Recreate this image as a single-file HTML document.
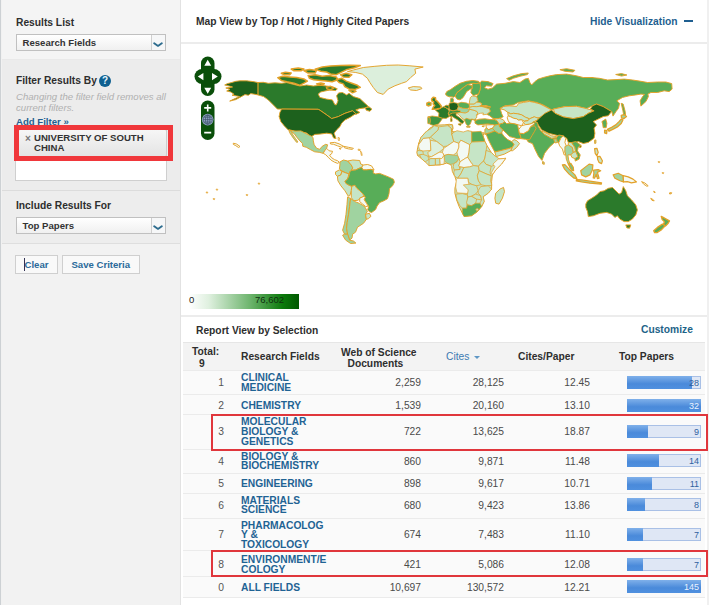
<!DOCTYPE html>
<html lang="en">
<head>
<meta charset="utf-8">
<title>Research Fields - University of South China</title>
<style>
*{box-sizing:border-box;margin:0;padding:0}
html,body{width:709px;height:605px;overflow:hidden;background:#fff}
body{font-family:"Liberation Sans",Arial,sans-serif;font-size:11px;color:#333;position:relative}
.abs{position:absolute}
.b{font-weight:bold}
#side{left:0;top:0;width:181px;height:605px;background:#f1f1f1;border-left:1.2px solid #cdd1d4;border-right:1px solid #e2e2e2}
.sec{position:absolute;left:2px;width:178px}
.h{position:absolute;font-weight:bold;font-size:10.25px;color:#2e2e2e;white-space:nowrap;line-height:12px}
.sel{position:absolute;left:15.5px;width:150.5px;height:16.5px;background:linear-gradient(#fff,#f0f0f0);border:1px solid #c0c0c0;font-weight:bold;font-size:9.6px;line-height:15px;padding-left:6px;color:#333;white-space:nowrap}
.sel i{position:absolute;right:0;top:0;width:14px;height:14.5px;border-left:1px solid #cfcfcf;background:#f6f7f8}
.sel svg{position:absolute;right:2px;top:7.2px}
.btn{position:absolute;top:255px;height:19px;background:#f9f9f9;border:1px solid #cfcfcf;color:#2a6a9a;font-weight:bold;font-size:9.6px;line-height:17.5px;text-align:center;white-space:nowrap}
.lnk{color:#1f5f90;font-weight:bold}
#main{left:181px;top:0;width:526px;height:605px;background:#fff}
.hl{position:absolute;left:181px;width:526px;height:2px;background:#ececec}
table{border-collapse:collapse}
.row{position:absolute;left:183px;width:522px;border-top:1px solid #ebebeb;background:#fafafa}
.row .n{position:absolute;left:28px;width:20px;text-align:center;color:#555;font-size:10.3px}
.row .f{position:absolute;left:58px;color:#1f6394;font-weight:bold;font-size:10.25px;line-height:9.6px;white-space:nowrap}
.row .v{position:absolute;text-align:right;color:#4a4a4a;font-size:10.25px;white-space:nowrap;width:80px;line-height:12px}
.bar{position:absolute;left:444px;width:74px;height:13px;background:#dfe7f5;border:1px solid #a9c0e6;border-left:none}
.bar b{position:absolute;left:0;top:-1px;height:13px;background:linear-gradient(#7fb0ea,#4a8ada 60%,#4f90df)}
.bar span{position:absolute;right:1px;top:0;font-size:9px;line-height:12px;color:#2f5fa0;font-weight:normal}
.bar span.w{color:#eaf2ff}
.red{position:absolute;border:2px solid #e0363c;pointer-events:none}
</style>
</head>
<body>
<div id="side" class="abs"></div>
<div class="sec" style="top:0;height:58.6px;background:#f4f4f4"></div>
<div class="sec" style="top:58.6px;height:132.4px;background:#ececec;border-top:1px solid #e9e9e9;border-bottom:1px solid #dcdcdc"></div>
<div class="sec" style="top:191px;height:53px;background:#ededed;border-bottom:1px solid #dedede"></div>
<div class="sec" style="top:244px;height:361px;background:#f2f2f2"></div>

<div class="h" style="left:16px;top:17px">Results List</div>
<div class="sel" style="top:34px">Research Fields<i></i><svg width="10" height="6" viewBox="0 0 10 6"><path d="M1.2 1.2 L5 3.9 L8.8 1.2" fill="none" stroke="#2d6c8e" stroke-width="1.9" stroke-linecap="round" stroke-linejoin="round"/></svg></div>

<div class="h" style="left:16px;top:75px">Filter Results By</div>
<div class="abs" style="left:99px;top:75px;width:12px;height:12px;border-radius:6px;background:#0f6090;color:#e6f6ff;font-weight:bold;font-size:10px;line-height:12px;text-align:center">?</div>
<div class="abs" style="left:16px;top:92.2px;width:160px;font-style:italic;font-size:9.6px;line-height:10.5px;color:#b0b0b0;white-space:nowrap">Changing the filter field removes all<br>current filters.</div>
<div class="abs lnk" style="left:16px;top:116px;font-size:9.6px;line-height:12px;white-space:nowrap">Add Filter »</div>

<div class="abs" style="left:15px;top:127px;width:152px;height:54px;background:#fff;border:1px solid #cfcfcf"></div>
<div class="abs" style="left:18px;top:129px;width:149px;height:28px;background:linear-gradient(#f6f6f6,#e4e4e4);border:1px solid #cdcdcd;border-radius:2px"></div>
<div class="abs" style="left:25px;top:133.5px;font-size:10px;line-height:10px;color:#777;font-weight:bold">×</div>
<div class="abs b" style="left:34px;top:133px;font-size:9.6px;line-height:10px;color:#333;white-space:nowrap">UNIVERSITY OF SOUTH<br>CHINA</div>
<div class="red" style="left:14px;top:125px;width:158.5px;height:36px;border-width:5px;border-color:#f0373b"></div>

<div class="h" style="left:16px;top:200px">Include Results For</div>
<div class="sel" style="top:217px">Top Papers<i></i><svg width="10" height="6" viewBox="0 0 10 6"><path d="M1.2 1.2 L5 3.9 L8.8 1.2" fill="none" stroke="#2d6c8e" stroke-width="1.9" stroke-linecap="round" stroke-linejoin="round"/></svg></div>

<div class="btn" style="left:15px;width:43px">Clear</div>
<div class="abs" style="left:24px;top:258px;width:1px;height:13px;background:#335"></div>
<div class="btn" style="left:62px;width:77.5px">Save Criteria</div>

<div id="main" class="abs"></div>
<div class="abs" style="left:707px;top:0;width:2px;height:605px;background:#f0f0f0"></div>
<div class="h" style="left:196px;top:16px">Map View by Top / Hot / Highly Cited Papers</div>
<div class="abs lnk" style="left:590px;top:16px;font-size:10.25px;line-height:12px;white-space:nowrap">Hide Visualization</div>
<div class="abs" style="left:684px;top:20px;width:9px;height:2px;background:#1f5f90"></div>
<div class="hl" style="top:42px"></div>

<svg class="abs" style="left:0;top:0" width="709" height="290" viewBox="0 0 709 290">
<g stroke="#e3a128" stroke-width="0.95" stroke-linejoin="round">
<path d="M257.9 82.5 L263.3 82.3 L268.3 83.3 L274.9 82.8 L281.6 83.3 L286.6 82.6 L293.2 84.3 L299.9 86.0 L306.6 85.0 L313.2 86.0 L319.9 85.3 L326.5 86.0 L333.2 87.0 L337.3 88.8 L335.7 90.6 L329.9 90.0 L324.9 91.0 L320.7 92.0 L318.2 94.1 L319.9 97.4 L326.5 99.1 L332.4 99.9 L334.8 104.6 L336.3 104.9 L338.0 100.8 L336.6 95.8 L338.6 92.9 L342.5 92.5 L346.6 94.9 L349.1 93.3 L353.3 96.6 L359.9 98.6 L364.9 103.3 L368.6 106.6 L364.9 107.9 L359.9 108.6 L355.8 109.9 L359.9 112.4 L355.8 114.4 L353.3 112.8 L352.5 110.8 L345.0 113.3 L338.3 116.6 L331.7 118.6 L326.7 114.9 L320.0 110.3 L318.2 109.3 L281.6 109.1 L277.4 109.1 L273.3 104.9 L268.3 99.9 L263.6 96.6 L257.9 94.9Z" fill="#2b7a2b"/>
<path d="M257.9 82.5 L253.3 81.6 L246.6 80.8 L240.0 80.8 L235.8 81.3 L231.7 82.5 L227.5 83.6 L224.7 85.0 L229.2 86.0 L232.5 87.0 L225.8 88.0 L230.0 89.3 L226.7 91.0 L230.8 92.0 L234.1 94.3 L232.0 95.3 L236.6 95.9 L239.6 96.6 L235.0 98.6 L229.7 101.1 L235.8 99.6 L240.8 96.9 L245.0 94.6 L248.3 95.3 L250.8 93.6 L255.0 94.3 L257.9 94.9Z" fill="#1d611d"/>
<path d="M281.6 109.1 L318.2 109.3 L320.0 110.3 L326.7 114.9 L331.7 118.6 L338.3 116.6 L345.0 113.3 L352.5 110.8 L355.8 113.6 L350.0 117.4 L345.0 119.9 L341.6 123.2 L340.0 126.6 L336.6 129.9 L334.1 133.2 L336.1 138.6 L333.6 138.1 L331.7 133.9 L326.7 133.2 L320.0 134.1 L314.9 134.4 L310.7 137.1 L306.6 132.9 L299.9 131.9 L293.2 131.1 L288.2 129.9 L284.1 125.7 L280.8 121.6 L279.1 116.6 L279.9 112.4Z" fill="#1d611d"/>
<path d="M289.2 129.8 L294.9 131.1 L300.9 130.9 L306.3 133.7 L311.8 136.4 L313.0 137.4 L313.3 140.9 L314.2 144.8 L316.7 148.3 L319.7 149.3 L322.2 146.3 L325.7 144.3 L327.6 144.8 L326.6 148.3 L324.7 150.8 L323.2 153.3 L319.2 152.3 L314.7 151.8 L310.8 149.8 L306.3 147.3 L302.8 146.3 L302.4 143.3 L299.9 140.9 L296.9 137.4 L294.4 133.9 L291.9 131.9Z" fill="#a0d3a0"/>
<path d="M289.0 130.5 L290.9 130.9 L292.9 134.9 L295.4 138.4 L297.9 141.9 L296.7 142.4 L293.9 138.9 L291.4 135.4 L289.5 132.4Z" fill="#a0d3a0"/>
<path d="M323.2 153.3 L324.7 150.8 L326.6 148.3 L329.1 150.8 L332.6 151.3 L331.6 153.8 L329.6 155.2 L331.6 157.7 L334.6 159.7 L337.5 160.7 L339.3 162.2 L337.7 163.4 L334.6 162.2 L331.1 160.2 L328.1 157.2 L325.7 154.7Z" fill="#f3f9f3"/>
<path d="M330.1 142.8 L334.6 142.4 L339.0 143.8 L343.5 146.3 L341.5 147.3 L337.5 145.8 L333.6 144.3 L330.6 144.0Z" fill="#f3f9f3"/>
<path d="M343.7 146.3 L348.5 147.3 L353.4 148.3 L352.4 149.4 L348.5 148.9 L344.5 147.8Z" fill="#f3f9f3"/>
<path d="M339.0 148.3 L341.0 148.6 L340.5 149.4Z" fill="#f3f9f3" stroke-width="0.8"/>
<path d="M338.0 137.4 L339.5 137.9 L339.1 140.9 L338.3 139.9Z" fill="#f3f9f3" stroke-width="0.8"/>
<path d="M358.2 149.1 L360.2 149.5 L359.9 150.5 L358.2 150.3Z" fill="#f3f9f3" stroke-width="0.8"/>
<path d="M360.4 150.8 L361.6 152.5 L362.2 155.4 L361.4 155.4 L360.9 152.9Z" fill="#f3f9f3" stroke-width="0.8"/>
<path d="M233.3 143.2 L236.6 144.0 L240.0 146.5 L238.6 147.5 L235.8 145.7 L233.3 144.4Z" fill="#f3f9f3"/>
<path d="M277.8 77.6 L282.7 76.2 L289.7 76.9 L296.8 77.6 L303.9 79.0 L307.4 81.1 L303.9 83.2 L299.6 85.3 L294.0 83.2 L286.9 81.8 L281.3 80.4Z" fill="#2b7a2b" stroke-width="1.5"/>
<path d="M281.3 73.3 L285.5 72.2 L291.2 73.1 L289.7 74.7 L284.1 74.7Z" fill="#2b7a2b" stroke-width="1.5"/>
<path d="M303.9 70.5 L309.5 69.4 L316.5 70.5 L315.1 73.1 L308.1 73.1Z" fill="#2b7a2b" stroke-width="1.5"/>
<path d="M315.1 69.1 L322.2 67.0 L330.6 66.0 L340.5 65.6 L350.4 65.2 L360.3 65.6 L354.6 67.7 L346.2 69.8 L340.5 72.6 L336.3 74.7 L330.6 74.0 L326.4 71.9 L320.8 71.2Z" fill="#2b7a2b" stroke-width="1.5"/>
<path d="M308.1 75.5 L315.1 74.7 L322.2 76.2 L329.2 75.5 L336.3 76.9 L337.7 79.7 L332.1 81.8 L326.4 81.1 L320.8 80.4 L313.7 79.7 L309.5 78.3Z" fill="#2b7a2b" stroke-width="1.5"/>
<path d="M336.3 79.7 L341.9 78.3 L346.2 81.1 L351.8 83.2 L357.4 85.3 L360.3 87.4 L354.6 89.6 L349.0 88.9 L344.8 86.7 L343.3 83.9 L339.1 82.5Z" fill="#2b7a2b" stroke-width="1.5"/>
<path d="M326.4 87.2 L330.6 86.3 L333.8 88.1 L330.6 89.7 L327.1 89.1Z" fill="#2b7a2b" stroke-width="1.5"/>
<path d="M291.2 69.1 L298.2 68.0 L303.9 69.1 L301.0 70.8 L294.0 70.8Z" fill="#2b7a2b" stroke-width="1.5"/>
<path d="M340.5 74.7 L346.2 73.3 L351.8 74.7 L349.0 77.3 L343.3 77.0Z" fill="#2b7a2b" stroke-width="1.5"/>
<path d="M316.5 83.9 L320.8 82.9 L324.3 83.8 L320.8 85.2Z" fill="#2b7a2b" stroke-width="1.5"/>
<path d="M349.0 90.3 L353.2 89.7 L356.0 91.4 L352.5 92.8Z" fill="#2b7a2b" stroke-width="1.5"/>
<path d="M347.5 71.6 L353.3 70.0 L363.3 67.5 L374.9 66.3 L386.6 65.3 L398.2 65.0 L409.9 65.8 L423.2 67.0 L414.9 69.1 L415.7 73.3 L410.7 77.5 L406.6 81.6 L401.6 83.3 L394.9 85.8 L388.2 89.1 L383.2 94.4 L377.4 92.5 L373.3 87.5 L369.9 82.5 L367.4 78.3 L362.4 74.1 L355.8 72.5Z" fill="#dcefdc"/>
<path d="M408.2 88.0 L413.2 86.6 L420.7 87.0 L421.9 88.6 L416.5 90.5 L410.7 90.0Z" fill="#dcefdc"/>
<path d="M365.3 107.9 L369.1 106.9 L371.9 109.1 L369.9 111.3 L366.3 110.3Z" fill="#2b7a2b"/>
<path d="M339.9 162.0 L343.4 160.0 L347.8 161.0 L351.3 165.0 L352.8 167.9 L351.3 170.4 L349.8 171.9 L348.8 173.9 L345.9 172.9 L341.9 170.9 L339.4 168.9 L339.9 165.0Z" fill="#a0d3a0"/>
<path d="M347.8 161.0 L352.8 160.0 L359.7 160.5 L360.7 164.0 L363.2 165.0 L361.7 167.4 L358.8 168.4 L355.8 169.9 L351.3 170.4 L352.8 167.9 L351.3 165.0Z" fill="#c6e5c6"/>
<path d="M363.2 165.0 L367.7 164.5 L371.6 165.9 L374.1 169.9 L370.7 169.4 L366.7 169.9 L363.2 169.9 L361.7 167.4Z" fill="#f3f9f3"/>
<path d="M335.5 171.9 L339.4 169.9 L341.9 171.4 L340.9 174.9 L337.4 176.4 L335.5 174.4Z" fill="#c6e5c6"/>
<path d="M337.4 176.4 L340.9 174.9 L341.9 171.4 L345.9 172.9 L348.8 173.9 L348.3 176.4 L347.4 179.3 L344.9 181.3 L345.9 183.3 L348.3 184.8 L351.8 186.3 L351.3 190.7 L349.8 195.7 L348.3 196.2 L344.9 190.7 L340.9 185.8 L337.9 180.8Z" fill="#c6e5c6"/>
<path d="M344.9 181.3 L347.4 179.3 L348.8 176.4 L349.8 171.9 L351.3 170.4 L355.8 169.9 L358.8 168.4 L361.7 167.4 L363.2 169.9 L366.7 169.9 L370.7 169.4 L373.6 170.4 L373.1 172.9 L375.6 173.9 L379.6 173.4 L383.5 174.9 L388.5 176.9 L393.5 179.3 L394.4 182.3 L392.5 185.8 L389.5 188.8 L389.0 193.7 L387.5 198.7 L384.0 200.7 L379.6 202.6 L377.1 206.1 L375.6 209.6 L371.6 212.5 L369.2 211.6 L367.7 209.6 L368.7 206.6 L366.7 203.6 L364.2 199.7 L365.2 197.2 L362.7 193.7 L359.7 190.7 L356.8 188.3 L354.8 185.3 L351.8 186.3 L348.3 184.8 L345.9 183.3Z" fill="#58ad58"/>
<path d="M351.8 186.3 L354.8 185.3 L356.8 188.3 L359.7 190.7 L362.7 193.7 L364.2 196.2 L359.7 198.2 L358.3 200.2 L353.8 200.7 L351.3 197.7 L351.3 190.7Z" fill="#c6e5c6"/>
<path d="M359.7 198.2 L364.2 196.2 L365.2 197.2 L364.2 199.7 L366.7 203.6 L368.2 206.1 L365.7 206.6 L362.7 204.1 L359.7 201.6Z" fill="#f3f9f3"/>
<path d="M347.6 196.9 L350.6 198.5 L349.6 206.4 L348.6 214.3 L347.2 222.3 L346.6 228.2 L347.6 234.2 L344.6 234.2 L342.6 230.2 L344.6 223.3 L346.0 214.3 L347.0 204.4Z" fill="#a0d3a0"/>
<path d="M350.6 198.5 L354.5 201.4 L359.5 203.4 L364.5 206.4 L367.4 211.4 L365.5 214.3 L366.4 219.3 L363.5 223.3 L357.5 227.2 L355.5 232.2 L352.6 234.2 L352.0 238.1 L349.6 240.1 L347.6 234.2 L346.6 228.2 L347.2 222.3 L348.6 214.3 L349.6 206.4Z" fill="#a0d3a0"/>
<path d="M365.5 214.3 L369.4 213.3 L371.0 216.3 L368.4 218.7 L366.4 219.3Z" fill="#c6e5c6"/>
<path d="M344.6 234.2 L347.6 234.2 L349.6 240.1 L353.6 241.1 L355.9 243.1 L350.6 243.5 L345.6 240.1 L342.6 235.2Z" fill="#a0d3a0"/>
<path d="M479.8 82.9 L481.7 81.1 L488.0 81.6 L493.1 83.6 L491.6 86.2 L486.1 85.8 L484.5 87.7 L488.0 89.2 L492.4 87.9 L496.6 84.1 L505.0 83.3 L513.3 81.6 L519.9 82.5 L524.9 79.1 L528.3 78.3 L529.9 82.5 L531.6 85.0 L534.9 81.6 L538.3 79.1 L543.2 77.5 L549.9 75.8 L556.6 74.6 L566.6 74.1 L576.5 75.8 L583.2 77.5 L593.2 77.5 L591.0 77.5 L599.3 78.3 L607.6 80.0 L616.0 79.6 L624.3 79.1 L632.6 80.0 L640.9 81.3 L647.6 82.5 L657.6 82.0 L665.9 82.0 L671.7 83.6 L672.1 89.1 L669.2 91.6 L664.2 90.8 L657.6 92.5 L650.9 92.5 L647.9 94.1 L648.4 96.6 L645.9 101.6 L640.9 106.1 L640.1 100.8 L642.6 96.6 L644.6 94.4 L640.9 94.1 L635.9 94.9 L629.3 95.8 L622.6 97.4 L616.8 100.8 L619.6 103.3 L618.5 108.3 L616.0 111.6 L613.0 116.1 L611.8 111.6 L603.2 106.6 L596.6 104.1 L592.4 105.8 L586.6 108.6 L576.6 106.3 L565.0 106.6 L553.3 109.1 L551.6 109.9 L549.1 108.3 L543.2 104.9 L536.6 102.4 L528.3 100.8 L518.3 102.4 L513.3 104.9 L505.0 105.8 L500.0 108.3 L500.2 108.8 L501.7 113.8 L503.2 116.8 L499.7 118.3 L496.3 118.8 L492.8 118.3 L489.8 115.8 L486.9 114.3 L490.3 111.3 L489.3 108.8 L484.9 107.4 L479.9 105.9 L490.5 107.0 L485.5 105.5 L481.0 106.1 L481.7 103.6 L479.1 102.3 L476.6 102.3 L477.9 100.4 L476.6 96.6 L478.5 94.0 L480.1 89.6 L480.6 86.4Z" fill="#58ad58"/>
<path d="M506.6 78.6 L513.3 75.8 L521.6 73.6 L528.3 73.0 L527.4 74.6 L519.9 76.3 L513.3 78.3 L509.1 80.3Z" fill="#58ad58"/>
<path d="M559.9 69.7 L566.6 68.7 L574.9 70.3 L573.2 72.0 L564.9 71.3Z" fill="#58ad58"/>
<path d="M615.7 74.5 L621.5 73.6 L626.9 75.0 L621.5 76.1Z" fill="#58ad58"/>
<path d="M621.2 103.3 L623.2 104.1 L625.2 111.6 L625.7 116.9 L624.0 116.6 L622.9 110.8Z" fill="#58ad58"/>
<path d="M500.2 108.8 L503.7 106.4 L509.7 105.9 L516.6 106.4 L518.6 103.4 L523.5 102.4 L529.5 101.4 L534.4 102.4 L540.0 103.9 L551.6 109.9 L548.2 112.4 L545.7 115.8 L539.9 117.4 L534.9 118.3 L534.4 116.8 L529.5 118.8 L525.5 117.3 L521.6 114.8 L517.6 113.8 L513.6 113.3 L510.7 113.8 L507.7 112.3 L504.2 109.8Z" fill="#c6e5c6"/>
<path d="M507.7 112.3 L510.7 113.8 L513.6 113.3 L517.6 113.8 L521.6 114.8 L525.5 117.3 L529.5 118.8 L528.0 120.7 L524.5 121.2 L521.6 119.7 L518.6 120.2 L516.6 118.8 L513.6 118.3 L510.7 116.8 L508.2 115.8Z" fill="#c6e5c6"/>
<path d="M507.2 117.8 L508.2 115.8 L510.7 116.8 L513.6 118.3 L516.6 118.8 L518.6 120.2 L521.6 119.7 L523.5 122.7 L521.6 125.7 L517.6 124.7 L513.6 123.7 L509.7 123.2 L508.2 120.7Z" fill="#f3f9f3"/>
<path d="M528.0 120.7 L529.5 118.8 L534.4 116.8 L538.4 118.3 L537.4 120.2 L534.9 120.9 L533.5 122.7 L529.5 124.2 L525.5 124.7 L523.5 122.7 L524.5 121.2Z" fill="#c6e5c6"/>
<path d="M553.3 109.1 L565.0 106.6 L576.6 106.3 L586.6 108.6 L594.1 110.8 L588.3 113.3 L583.3 116.6 L573.3 118.6 L563.3 116.9 L555.0 113.3Z" fill="#c6e5c6"/>
<path d="M535.8 121.6 L540.0 117.4 L545.0 113.3 L551.6 109.9 L555.0 113.3 L563.3 116.9 L573.3 118.6 L583.3 116.6 L588.3 113.3 L594.1 110.8 L590.3 109.1 L592.4 105.8 L596.6 104.1 L603.2 106.6 L611.6 111.6 L608.2 115.8 L603.2 116.6 L598.2 119.1 L593.2 121.6 L596.6 124.9 L594.1 128.2 L594.9 133.2 L594.1 138.2 L588.3 142.4 L583.3 143.5 L578.3 141.6 L573.3 143.2 L568.3 142.4 L566.6 138.2 L561.6 136.6 L555.0 134.9 L548.3 133.2 L541.7 129.9 L538.3 124.9Z" fill="#1d611d"/>
<path d="M579.3 145.7 L581.3 145.7 L580.9 147.5 L579.4 147.4Z" fill="#1d611d"/>
<path d="M594.6 140.2 L595.9 139.9 L595.9 143.2 L594.7 143.5Z" fill="#a0d3a0"/>
<path d="M601.9 121.6 L605.7 119.1 L606.9 123.2 L606.2 127.7 L603.2 127.7 L602.7 124.1Z" fill="#58ad58"/>
<path d="M607.4 129.4 L611.6 127.4 L615.7 124.9 L619.0 121.6 L621.2 119.1 L622.9 119.9 L621.2 123.6 L617.4 126.9 L613.2 129.1 L609.1 131.2Z" fill="#a0d3a0" stroke-width="1.3"/>
<path d="M621.2 115.3 L624.0 114.6 L626.5 116.6 L624.0 118.6 L621.5 117.9Z" fill="#a0d3a0" stroke-width="1.3"/>
<path d="M604.6 130.2 L606.9 130.7 L606.6 133.6 L604.6 132.9Z" fill="#a0d3a0" stroke-width="1.3"/>
<path d="M525.0 130.0 L530.0 126.6 L533.3 121.6 L537.5 122.5 L538.3 126.6 L540.8 130.8 L544.1 134.1 L551.6 138.3 L556.6 137.5 L558.6 135.0 L563.3 135.8 L560.8 138.3 L558.6 142.9 L556.3 140.8 L553.3 143.6 L549.1 147.4 L544.6 153.3 L542.0 160.4 L538.6 156.6 L535.3 149.9 L532.5 143.6 L528.3 142.0 L525.3 137.5Z" fill="#58ad58"/>
<path d="M542.5 161.6 L544.1 162.1 L544.3 164.3 L542.6 163.9Z" fill="#a0d3a0"/>
<path d="M540.8 130.8 L544.1 132.0 L551.6 135.8 L556.6 136.6 L556.6 137.5 L551.6 138.3 L544.1 134.1Z" fill="#c6e5c6"/>
<path d="M553.6 139.1 L556.6 138.8 L557.4 142.5 L554.9 142.9Z" fill="#a0d3a0"/>
<path d="M519.1 133.1 L523.5 133.6 L528.5 130.7 L530.5 126.7 L534.4 125.7 L536.2 128.2 L534.4 131.6 L532.0 135.6 L529.5 139.8 L525.5 139.3 L520.8 138.6 L520.6 136.6Z" fill="#58ad58"/>
<path d="M518.6 129.7 L521.6 125.7 L525.5 124.7 L529.5 124.2 L533.5 122.7 L534.9 123.5 L530.5 126.7 L528.5 130.7 L523.5 133.6 L519.1 133.1Z" fill="#f3f9f3"/>
<path d="M498.8 124.2 L502.7 123.2 L504.7 121.7 L506.7 123.7 L509.7 123.2 L513.6 123.7 L517.6 124.7 L518.6 129.7 L519.1 133.1 L520.6 136.6 L520.8 138.6 L517.6 138.8 L513.6 137.6 L509.7 136.6 L506.7 133.6 L502.7 129.7 L499.7 127.2Z" fill="#58ad58"/>
<path d="M492.8 118.3 L496.3 118.8 L499.7 118.3 L503.2 119.7 L504.7 121.7 L502.7 123.2 L498.8 124.2 L497.3 121.2 L494.8 119.7Z" fill="#c6e5c6"/>
<path d="M475.0 120.7 L478.9 119.2 L484.9 118.8 L489.8 119.5 L494.8 119.7 L497.3 121.2 L498.8 124.2 L494.8 125.2 L492.3 124.7 L487.8 123.9 L482.9 124.4 L477.9 124.9 L475.0 123.2Z" fill="#58ad58"/>
<path d="M472.5 118.8 L475.0 118.3 L476.1 119.7 L474.0 120.5Z" fill="#58ad58"/>
<path d="M492.3 128.2 L494.8 125.2 L498.8 124.2 L499.7 127.2 L502.7 129.7 L501.7 133.1 L498.8 133.6 L494.8 131.1Z" fill="#a0d3a0"/>
<path d="M485.9 124.9 L492.3 124.7 L494.8 125.2 L492.3 128.2 L488.8 129.7 L486.4 128.2Z" fill="#f3f9f3"/>
<path d="M484.9 129.2 L486.4 128.2 L488.8 129.7 L492.3 128.2 L494.8 131.1 L489.3 133.1 L487.4 133.6 L484.9 134.6Z" fill="#a0d3a0"/>
<path d="M485.9 133.6 L489.3 133.1 L494.8 131.1 L498.8 133.6 L501.7 133.1 L504.2 136.6 L507.7 139.6 L511.6 141.6 L514.1 144.3 L512.4 147.3 L508.5 148.7 L504.2 149.7 L499.7 150.9 L494.8 152.0 L491.3 145.5 L488.3 139.6Z" fill="#58ad58"/>
<path d="M494.8 152.0 L499.7 150.9 L504.2 149.7 L508.5 148.7 L512.4 147.3 L510.8 150.7 L504.2 154.2 L496.2 156.6Z" fill="#c6e5c6"/>
<path d="M511.6 141.6 L514.1 139.6 L516.6 140.6 L519.6 143.5 L516.6 147.5 L512.6 150.7 L510.8 150.7 L512.4 147.3 L514.1 144.3Z" fill="#c6e5c6"/>
<path d="M481.9 126.2 L484.4 125.7 L483.7 126.9Z" fill="#a0d3a0"/>
<path d="M427.7 117.5 L429.9 117.3 L430.4 120.7 L429.9 123.9 L427.8 123.5Z" fill="#58ad58" stroke-width="0.8"/>
<path d="M427.7 116.9 L432.2 116.0 L438.5 116.9 L442.6 118.2 L441.0 120.7 L438.5 124.1 L433.4 125.4 L430.3 124.5 L429.9 123.9 L430.4 120.7 L429.9 117.3Z" fill="#3f943f" stroke-width="0.8"/>
<path d="M435.3 109.9 L439.1 109.0 L441.0 107.7 L443.8 106.7 L445.9 107.7 L448.0 109.0 L449.3 111.2 L448.3 113.7 L449.4 116.6 L446.1 118.4 L442.6 118.2 L438.5 116.9 L438.9 113.1 L437.2 111.8Z" fill="#2b7a2b" stroke-width="0.8"/>
<path d="M443.8 106.7 L446.1 105.2 L448.9 105.5 L449.3 108.3 L448.0 109.0 L445.9 107.7Z" fill="#2b7a2b" stroke-width="0.8"/>
<path d="M448.9 105.5 L449.3 103.2 L453.7 102.5 L457.8 103.4 L458.4 106.7 L457.2 109.9 L453.1 110.9 L449.7 109.9 L449.3 108.3Z" fill="#1d611d" stroke-width="0.8"/>
<path d="M450.2 102.3 L450.6 98.5 L452.5 97.8 L453.7 99.8 L453.1 102.5Z" fill="#58ad58" stroke-width="0.8"/>
<path d="M448.3 113.7 L449.3 111.2 L449.7 109.9 L453.1 110.9 L457.2 109.9 L460.1 110.5 L460.7 112.4 L456.9 113.1 L452.5 113.7 L449.4 114.6Z" fill="#3f943f" stroke-width="0.8"/>
<path d="M449.2 114.6 L452.5 113.1 L456.5 112.8 L456.0 115.0 L458.8 116.9 L461.6 119.2 L464.1 121.5 L462.6 123.7 L460.1 122.5 L457.8 119.9 L454.7 118.2 L452.2 116.5 L450.2 116.6 L449.2 115.9Z" fill="#2b7a2b" stroke-width="0.8"/>
<path d="M458.2 123.9 L461.4 123.5 L460.7 125.4 L458.6 124.8Z" fill="#2b7a2b" stroke-width="0.8"/>
<path d="M450.4 118.4 L452.0 118.2 L452.1 121.3 L450.7 121.5Z" fill="#2b7a2b" stroke-width="0.8"/>
<path d="M450.9 115.9 L451.8 115.9 L451.7 117.7 L450.9 117.5Z" fill="#2b7a2b" stroke-width="0.8"/>
<path d="M457.8 103.4 L461.4 102.3 L466.4 102.9 L469.2 104.2 L469.6 107.4 L467.1 108.6 L462.6 108.3 L458.4 106.7Z" fill="#58ad58" stroke-width="0.8"/>
<path d="M457.2 109.9 L458.4 106.7 L462.6 108.3 L467.1 108.6 L469.6 109.3 L468.3 111.8 L465.2 113.1 L460.7 112.4 L460.1 110.5Z" fill="#a0d3a0" stroke-width="0.8"/>
<path d="M456.3 113.3 L460.7 112.4 L465.2 113.1 L468.3 111.8 L469.6 109.3 L472.8 109.9 L476.6 111.2 L477.9 113.1 L476.8 115.6 L476.6 117.9 L474.7 119.4 L472.1 119.4 L470.2 120.1 L466.4 118.8 L464.5 120.1 L461.4 117.5 L458.8 114.6Z" fill="#c6e5c6" stroke-width="0.8"/>
<path d="M464.3 119.7 L466.4 118.4 L470.2 119.4 L472.5 119.0 L471.3 121.3 L470.2 124.3 L468.2 126.0 L466.2 124.3 L465.4 122.2Z" fill="#58ad58" stroke-width="0.8"/>
<path d="M466.4 126.4 L470.2 126.4 L470.0 127.3 L466.7 127.2Z" fill="#58ad58" stroke-width="0.8"/>
<path d="M469.2 104.2 L469.6 101.0 L470.2 97.8 L472.1 95.9 L476.6 96.6 L477.9 100.4 L476.6 102.3 L474.0 104.2Z" fill="#c6e5c6" stroke-width="0.8"/>
<path d="M469.2 104.2 L474.0 104.2 L476.6 102.3 L479.1 102.3 L481.7 103.6 L481.0 106.1 L476.6 106.7 L472.8 106.5 L469.6 107.4Z" fill="#c6e5c6" stroke-width="0.8"/>
<path d="M469.6 107.4 L472.8 106.5 L476.6 106.7 L481.0 106.1 L485.5 105.5 L490.5 107.0 L479.9 105.9 L484.9 107.4 L489.3 108.8 L490.3 111.3 L486.9 114.3 L482.9 114.8 L483.4 113.0 L480.4 113.3 L478.9 113.8 L476.4 115.3 L477.9 113.1 L476.6 111.2 L472.8 109.9 L469.6 109.3Z" fill="#c6e5c6" stroke-width="0.8"/>
<path d="M445.5 94.0 L446.8 91.5 L450.6 89.6 L455.0 86.4 L460.1 83.3 L466.4 81.3 L472.8 80.5 L478.5 81.3 L479.8 82.9 L476.6 83.6 L472.8 83.3 L467.7 84.5 L463.9 87.1 L460.1 90.2 L456.9 92.8 L455.3 95.9 L453.7 97.2 L452.2 96.8 L449.3 96.8 L446.4 95.6Z" fill="#58ad58"/>
<path d="M455.3 95.9 L456.9 92.8 L460.1 90.2 L463.9 87.1 L467.7 84.5 L472.1 85.8 L472.4 88.1 L470.2 89.2 L466.7 91.5 L464.5 95.3 L462.9 97.8 L460.1 99.8 L457.5 99.4 L456.0 97.8Z" fill="#58ad58"/>
<path d="M472.1 85.8 L472.8 83.3 L476.6 83.6 L479.8 82.9 L480.6 86.4 L480.1 89.6 L478.5 94.0 L473.4 95.6 L470.9 92.8 L471.3 89.6 L472.4 88.1Z" fill="#58ad58"/>
<path d="M431.6 99.1 L433.2 97.3 L435.5 97.8 L435.7 100.1 L437.5 101.4 L439.5 103.7 L441.4 106.2 L440.5 108.3 L436.6 109.0 L432.2 109.3 L433.4 107.0 L434.7 105.5 L433.2 103.9 L433.7 101.9 L431.9 101.0Z" fill="#2b7a2b" stroke-width="1.5"/>
<path d="M426.8 103.2 L429.0 102.2 L431.1 102.8 L430.9 105.2 L428.3 106.0 L426.8 105.2Z" fill="#58ad58" stroke-width="1.4"/>
<path d="M424.5 134.7 L429.6 128.3 L434.1 125.8 L438.5 125.1 L444.8 124.8 L449.3 124.3 L452.5 124.8 L453.1 128.3 L451.8 131.5 L456.3 132.1 L461.4 134.7 L465.2 133.4 L467.7 130.9 L472.1 132.1 L477.9 132.8 L484.2 132.8 L483.0 135.8 L484.9 141.5 L486.8 145.3 L491.2 152.3 L494.4 155.5 L498.2 159.1 L505.7 158.3 L501.5 164.1 L495.7 169.9 L492.4 174.9 L491.6 181.6 L491.6 189.1 L488.2 193.2 L483.2 196.6 L484.1 201.6 L481.6 206.6 L477.4 211.6 L471.6 215.7 L464.1 216.5 L462.4 213.2 L459.1 206.6 L456.6 199.9 L454.9 193.2 L454.9 188.2 L456.6 181.6 L454.9 176.6 L452.4 171.6 L451.6 166.6 L450.6 164.4 L446.8 163.1 L439.8 165.0 L435.4 165.0 L429.0 165.6 L425.2 161.8 L421.4 158.6 L417.6 155.5 L417.0 152.3 L417.6 147.8 L418.6 144.0 L420.8 137.7 L424.0 133.9 L426.5 131.3Z" fill="#c6e5c6"/>
<path d="M418.9 144.0 L423.3 138.3 L429.0 137.7 L430.3 140.2 L430.9 150.4 L422.7 151.0 L419.5 149.8 L418.6 146.6Z" fill="#f3f9f3" stroke-width="0.7"/>
<path d="M430.3 137.1 L437.9 130.1 L438.6 126.9 L448.1 125.6 L451.3 128.2 L451.9 134.5 L453.8 141.5 L447.4 145.9 L443.3 146.6 L436.7 141.5Z" fill="#c6e5c6" stroke-width="0.7"/>
<path d="M426.5 131.3 L431.6 128.2 L434.1 125.6 L438.6 126.9 L437.9 130.1 L430.3 137.1 L429.0 137.7 L423.3 138.3 L418.9 144.0 L418.6 144.0 L420.8 137.7 L424.0 133.9Z" fill="#c6e5c6" stroke-width="0.7"/>
<path d="M448.1 125.6 L451.9 124.4 L452.5 127.5 L451.6 130.7 L453.2 132.6 L451.9 134.5 L451.3 128.2Z" fill="#c6e5c6" stroke-width="0.7"/>
<path d="M453.2 132.6 L457.0 130.7 L463.3 132.0 L467.1 130.7 L471.6 131.3 L471.8 142.1 L469.7 144.7 L460.8 140.2 L458.9 143.4 L453.8 141.5 L451.9 134.5Z" fill="#c6e5c6" stroke-width="0.7"/>
<path d="M471.8 132.0 L481.1 131.3 L483.0 135.8 L484.9 141.5 L471.8 142.1Z" fill="#58ad58" stroke-width="0.7"/>
<path d="M430.3 140.2 L436.7 141.5 L443.3 146.6 L443.6 148.5 L439.2 152.3 L434.8 154.8 L431.6 156.7 L428.4 156.1 L427.8 152.3 L430.9 150.4Z" fill="#dcefdc" stroke-width="0.7"/>
<path d="M443.6 148.5 L447.4 145.9 L453.8 141.5 L458.9 143.4 L458.9 147.2 L457.0 152.3 L453.2 155.1 L448.1 154.4 L444.0 155.5 L442.4 152.3Z" fill="#f3f9f3" stroke-width="0.7"/>
<path d="M458.9 143.4 L460.8 140.2 L469.7 144.7 L469.0 152.3 L467.8 157.4 L465.9 158.0 L462.0 160.5 L460.1 161.8 L458.9 158.6 L457.6 155.5 L457.0 152.3 L458.9 147.2Z" fill="#f3f9f3" stroke-width="0.7"/>
<path d="M471.8 142.1 L484.9 141.5 L486.8 145.3 L486.2 150.4 L484.9 158.0 L483.6 161.2 L481.1 163.1 L478.5 166.3 L473.5 165.6 L470.9 162.4 L467.8 157.4 L469.0 152.3 L469.7 144.7Z" fill="#c6e5c6" stroke-width="0.7"/>
<path d="M484.9 158.0 L486.2 150.4 L491.2 152.3 L494.4 155.5 L500.0 159.3 L497.6 164.4 L491.2 166.3 L486.2 164.4 L483.6 161.2Z" fill="#c6e5c6" stroke-width="0.7"/>
<path d="M498.2 159.1 L505.7 158.3 L501.5 164.1 L495.7 169.9 L492.4 174.9 L491.6 172.4 L494.9 166.6 L492.9 164.1Z" fill="#f3f9f3" stroke-width="0.7"/>
<path d="M444.0 155.5 L448.1 154.4 L453.2 155.1 L457.6 155.5 L458.9 158.6 L457.0 161.8 L453.8 163.7 L450.6 164.4 L446.8 163.1 L444.3 160.5Z" fill="#a0d3a0" stroke-width="0.7"/>
<path d="M453.8 163.7 L457.0 161.8 L458.9 158.6 L460.1 161.8 L458.9 165.6 L460.1 169.4 L454.4 170.1 L453.2 166.9Z" fill="#c6e5c6" stroke-width="0.7"/>
<path d="M460.1 161.8 L462.0 160.5 L465.9 158.0 L467.8 157.4 L470.9 162.4 L473.5 165.6 L469.7 166.9 L463.9 167.5 L460.1 166.9 L458.9 165.6Z" fill="#f3f9f3" stroke-width="0.7"/>
<path d="M419.5 154.8 L422.7 154.2 L427.8 156.1 L429.0 159.3 L425.2 161.8 L421.4 158.6Z" fill="#c6e5c6" stroke-width="0.7"/>
<path d="M428.4 156.1 L431.6 156.7 L434.8 154.8 L439.2 152.3 L442.4 152.3 L444.0 155.5 L441.7 158.6 L435.4 158.6 L430.9 158.6Z" fill="#f3f9f3" stroke-width="0.7"/>
<path d="M429.0 159.3 L430.9 158.6 L435.4 158.6 L435.4 165.0 L429.0 165.6Z" fill="#c6e5c6" stroke-width="0.7"/>
<path d="M435.4 158.6 L439.8 158.3 L440.2 164.6 L435.4 165.0Z" fill="#c6e5c6" stroke-width="0.7"/>
<path d="M439.8 158.3 L441.7 158.6 L444.0 155.5 L444.3 160.5 L444.0 164.1 L440.2 164.6Z" fill="#f3f9f3" stroke-width="0.7"/>
<path d="M417.0 152.3 L417.6 150.4 L422.7 151.0 L423.3 153.6 L422.7 154.2 L419.5 154.8 L417.6 155.5Z" fill="#c6e5c6" stroke-width="0.7"/>
<path d="M454.4 170.1 L460.1 169.4 L460.1 166.9 L463.9 167.5 L460.8 173.9 L457.6 178.3 L454.4 175.8 L453.8 172.6Z" fill="#c6e5c6" stroke-width="0.7"/>
<path d="M460.8 173.9 L463.9 167.5 L469.7 166.9 L473.5 165.6 L478.5 166.3 L479.2 170.7 L477.3 175.8 L478.5 180.9 L481.1 184.7 L476.0 185.9 L472.2 184.7 L468.4 182.1 L467.8 178.3 L462.0 178.3 L457.6 178.3Z" fill="#c6e5c6" stroke-width="0.7"/>
<path d="M456.3 179.6 L457.6 178.3 L462.0 178.3 L467.8 178.3 L468.4 182.1 L469.7 187.2 L467.8 193.5 L457.0 192.9 L455.7 187.2Z" fill="#f3f9f3" stroke-width="0.7"/>
<path d="M478.5 166.3 L481.1 163.1 L483.6 161.2 L486.2 164.4 L491.2 166.3 L490.0 172.0 L491.2 175.8 L486.2 173.9 L479.2 170.7Z" fill="#c6e5c6" stroke-width="0.7"/>
<path d="M479.2 170.7 L486.2 173.9 L491.2 175.8 L490.6 180.9 L491.9 185.3 L486.2 185.9 L481.1 184.7 L478.5 180.9 L477.3 175.8Z" fill="#c6e5c6" stroke-width="0.7"/>
<path d="M455.8 194.1 L462.4 193.6 L467.4 194.9 L467.9 196.9 L466.6 208.2 L462.4 208.2 L459.9 205.7 L456.9 199.9Z" fill="#c6e5c6" stroke-width="0.7"/>
<path d="M467.9 196.9 L471.6 196.2 L476.6 199.1 L475.7 203.2 L471.6 205.7 L467.4 204.9 L466.6 202.4Z" fill="#c6e5c6" stroke-width="0.7"/>
<path d="M463.3 184.9 L470.7 184.1 L476.6 185.8 L478.2 190.7 L475.7 194.1 L471.6 196.2 L467.9 196.9 L467.4 194.9 L468.2 189.9Z" fill="#c6e5c6" stroke-width="0.7"/>
<path d="M471.6 196.2 L475.7 194.1 L480.7 195.7 L481.6 199.9 L476.6 199.1Z" fill="#c6e5c6" stroke-width="0.7"/>
<path d="M478.2 190.7 L480.7 186.6 L488.2 185.8 L491.6 189.1 L488.2 193.2 L483.2 196.6 L484.1 201.6 L481.6 206.6 L479.9 203.2 L481.6 199.9 L480.7 195.7 L478.2 193.2Z" fill="#c6e5c6" stroke-width="0.7"/>
<path d="M462.4 208.2 L466.6 208.2 L467.4 204.9 L471.6 205.7 L475.7 203.2 L479.9 203.2 L481.6 206.6 L477.4 211.6 L471.6 215.7 L464.1 216.5 L462.4 213.2Z" fill="#58ad58" stroke-width="0.7"/>
<path d="M475.7 209.1 L477.9 208.2 L478.6 210.2 L476.6 211.2Z" fill="#c6e5c6" stroke-width="0.7"/>
<path d="M495.7 193.2 L499.9 189.1 L503.5 187.4 L504.5 191.6 L502.4 198.2 L499.0 204.1 L495.7 203.2 L494.9 198.2Z" fill="#c6e5c6"/>
<path d="M558.6 142.9 L560.8 138.3 L563.3 135.8 L565.8 138.3 L564.9 142.5 L566.6 146.6 L564.9 151.6 L565.8 154.9 L564.1 154.9 L562.4 149.1 L559.6 145.8Z" fill="#f3f9f3"/>
<path d="M564.9 146.6 L568.3 144.9 L572.4 147.4 L573.3 152.4 L570.8 154.9 L567.9 154.9 L568.6 159.9 L570.3 164.9 L568.6 165.3 L566.3 159.1 L565.8 154.9 L564.9 151.6Z" fill="#a0d3a0"/>
<path d="M568.3 142.5 L571.6 142.5 L574.9 147.4 L575.8 151.6 L573.3 152.4 L572.4 147.4 L568.3 144.9Z" fill="#c6e5c6"/>
<path d="M571.6 142.5 L575.8 141.6 L580.7 144.9 L578.2 147.4 L577.4 150.8 L580.2 154.9 L579.1 159.1 L575.3 161.1 L574.9 158.6 L577.9 156.6 L575.8 151.6 L574.9 147.4Z" fill="#58ad58"/>
<path d="M570.8 154.9 L573.3 152.4 L575.8 151.6 L577.9 156.6 L574.9 158.6 L571.9 157.4Z" fill="#c6e5c6"/>
<path d="M568.6 163.6 L570.8 163.3 L573.3 167.4 L573.6 170.7 L571.6 170.2 L569.6 166.9Z" fill="#7cc07c" stroke-width="1.2"/>
<path d="M562.4 164.9 L564.9 164.6 L569.9 169.9 L574.9 174.9 L576.9 178.6 L574.1 178.2 L569.1 174.1 L564.6 169.1Z" fill="#a0d3a0" stroke-width="1.2"/>
<path d="M580.7 170.7 L584.9 167.4 L589.1 164.1 L592.9 164.9 L592.4 169.9 L589.9 174.9 L585.7 176.9 L581.6 174.9Z" fill="#a0d3a0" stroke-width="1.2"/>
<path d="M576.3 179.6 L581.6 179.9 L589.9 181.2 L601.6 182.9 L601.2 184.2 L589.9 183.2 L581.6 181.9 L576.3 180.9Z" fill="#a0d3a0" stroke-width="1.2"/>
<path d="M593.6 170.2 L598.2 169.6 L600.7 170.7 L597.4 172.4 L599.1 178.2 L597.4 178.6 L596.2 174.1 L594.6 178.2 L593.2 177.9 L593.9 173.2Z" fill="#a0d3a0" stroke-width="1.2"/>
<path d="M594.6 148.6 L596.9 148.3 L598.2 152.4 L596.9 155.8 L595.2 153.3Z" fill="#c6e5c6" stroke-width="1.2"/>
<path d="M597.4 156.6 L599.9 156.3 L602.4 160.8 L601.6 163.6 L599.1 162.4 L597.7 159.6Z" fill="#c6e5c6" stroke-width="1.2"/>
<path d="M613.2 174.9 L618.2 173.2 L623.2 175.7 L623.5 181.9 L619.9 180.7 L614.9 178.2Z" fill="#a0d3a0" stroke-width="1.2"/>
<path d="M623.2 175.7 L628.2 176.9 L633.0 179.1 L636.5 181.9 L631.5 182.9 L627.4 181.6 L623.5 181.9Z" fill="#f3f9f3" stroke-width="1.2"/>
<path d="M585.8 204.1 L587.5 200.8 L591.6 198.3 L596.6 195.0 L600.0 191.6 L604.1 190.8 L608.3 188.3 L612.5 187.5 L615.8 190.8 L619.1 194.1 L621.6 192.5 L623.3 186.6 L625.8 190.8 L627.4 195.8 L631.6 199.9 L635.8 204.9 L637.4 209.9 L635.8 214.9 L632.4 219.1 L628.3 221.6 L624.1 221.6 L619.9 219.1 L617.4 215.8 L614.9 217.4 L611.6 214.1 L606.6 212.4 L600.0 213.3 L593.3 215.8 L588.3 216.6 L587.5 211.6 L585.8 207.4Z" fill="#2b7a2b"/>
<path d="M625.8 224.9 L630.8 224.9 L629.6 228.2 L626.9 227.9Z" fill="#2b7a2b"/>
<path d="M661.2 216.3 L663.2 217.4 L666.2 219.1 L669.5 220.9 L668.2 223.2 L665.7 225.9 L663.2 224.6 L664.5 221.9 L662.2 219.6Z" fill="#58ad58" stroke-width="1.3"/>
<path d="M653.7 230.7 L657.4 227.4 L662.4 224.1 L665.2 225.7 L661.6 229.6 L656.9 232.7 L654.6 232.6Z" fill="#58ad58" stroke-width="1.3"/>
<path d="M641.6 181.6 L644.9 183.0 L648.2 185.8 L646.9 186.3 L643.6 184.1Z" fill="#f3f9f3"/>
<path d="M650.7 198.3 L653.2 199.6 L654.2 200.9 L651.9 200.3Z" fill="#f3f9f3"/>
<path d="M653.6 191.3 L655.2 192.0 L654.6 193.0Z" fill="#f3f9f3"/>
<path d="M669.2 193.0 L671.2 193.3 L670.2 194.3Z" fill="#f3f9f3"/>
<path d="M206.2 192.0 L207.8 192.2 L207.5 193.1 L206.4 193.0Z" fill="#f3f9f3" stroke-width="0.8"/>
<path d="M216.2 189.1 L217.8 189.3 L217.5 190.2 L216.4 190.1Z" fill="#f3f9f3" stroke-width="0.8"/>
<path d="M213.2 198.5 L214.8 198.7 L214.5 199.6 L213.4 199.5Z" fill="#f3f9f3" stroke-width="0.8"/>
<path d="M246.2 194.5 L247.8 194.7 L247.5 195.6 L246.4 195.5Z" fill="#f3f9f3" stroke-width="0.8"/>
<path d="M258.2 183.1 L259.8 183.3 L259.5 184.2 L258.4 184.1Z" fill="#f3f9f3" stroke-width="0.8"/>
<path d="M658.2 161.5 L659.8 161.7 L659.5 162.6 L658.4 162.5Z" fill="#f3f9f3" stroke-width="0.8"/>
<path d="M662.2 172.5 L663.8 172.7 L663.5 173.6 L662.4 173.5Z" fill="#f3f9f3" stroke-width="0.8"/>
<path d="M670.2 192.5 L671.8 192.7 L671.5 193.6 L670.4 193.5Z" fill="#f3f9f3" stroke-width="0.8"/>
</g>
<g stroke="none">
<rect x="201" y="56.5" width="13.5" height="39.5" rx="6.75" fill="#0a4f0a"/>
<rect x="194.5" y="69" width="27" height="15" rx="7.5" fill="#0a4f0a"/>
<path d="M207.7 59.8 L211.2 65.8 L204.3 65.8Z M207.7 93.8 L211.2 87.8 L204.3 87.8Z M197.8 76.5 L203.4 72.9 L203.4 80.2Z M217.8 76.5 L212 72.9 L212 80.2Z" fill="#fff"/>
<rect x="201" y="100.5" width="13.5" height="39.5" rx="6.75" fill="#0a4f0a"/>
<path d="M204.2 107.9 H211.2 M207.7 104.4 V111.4 M204.2 132.6 H211.2" stroke="#fff" stroke-width="1.6" fill="none"/>
<circle cx="207.7" cy="119.6" r="5.8" fill="#93a3c6"/>
<g fill="none" stroke="#2f4a5a" stroke-width="0.6"><circle cx="207.7" cy="119.6" r="4.6"/><ellipse cx="207.7" cy="119.6" rx="2.2" ry="4.6"/><path d="M203.1 119.6 H212.3 M203.8 117.2 H211.6 M203.8 122 H211.6 M207.7 115 V124.2"/></g>
</g>

</svg>

<div class="abs" style="left:189px;top:294px;width:110.3px;height:15px;background:linear-gradient(90deg,#fff 0%,#dff0df 18%,#6fb56f 55%,#0b7a0b 85%,#005800 100%)"></div>
<div class="abs" style="left:189px;top:294px;font-size:9.5px;line-height:11px;color:#222">0</div>
<div class="abs" style="left:255px;top:294px;font-size:9.5px;line-height:11px;color:#0f300f">76,602</div>

<div class="hl" style="top:315px"></div>
<div class="h" style="left:196px;top:325px">Report View by Selection</div>
<div class="abs lnk" style="left:641px;top:324px;font-size:10.25px;line-height:12px;color:#1d6388">Customize</div>

<div class="abs" style="left:183px;top:342px;width:522px;height:29px;background:#f3f3f3;border-top:1px solid #e6e6e6"></div>
<div class="h" style="left:192px;top:346px;line-height:11.5px">Total:<br><span style="padding-left:7px">9</span></div>
<div class="h" style="left:241px;top:351px">Research Fields</div>
<div class="h" style="left:341px;top:346.5px;line-height:11px">Web of Science<br><span style="padding-left:6.5px">Documents</span></div>
<div class="abs" style="left:446px;top:351px;font-size:10.25px;line-height:12px;color:#3c7ab2;white-space:nowrap">Cites</div>
<div class="abs" style="left:474px;top:356px;width:0;height:0;border-left:3px solid transparent;border-right:3px solid transparent;border-top:3px solid #5f97c5"></div>
<div class="h" style="left:518px;top:351px">Cites/Paper</div>
<div class="h" style="left:619px;top:351px">Top Papers</div>

<div class="row" style="top:370px;height:24px"><div class="n" style="top:6.1px;line-height:12px">1</div><div class="f" style="top:2.4px">CLINICAL<br>MEDICINE</div><div class="v" style="left:158px;top:6.1px">2,259</div><div class="v" style="left:241px;top:6.1px">28,125</div><div class="v" style="left:327px;top:6.1px">12.45</div><div class="bar" style="top:4.9px"><b style="width:65px"></b><span>28</span></div></div>
<div class="row" style="top:394px;height:20px"><div class="n" style="top:4.8px;line-height:12px">2</div><div class="f" style="top:5.9px">CHEMISTRY</div><div class="v" style="left:158px;top:4.8px">1,539</div><div class="v" style="left:241px;top:4.8px">20,160</div><div class="v" style="left:327px;top:4.8px">13.10</div><div class="bar" style="top:3.6px"><b style="width:74px"></b><span class="w">32</span></div></div>
<div class="row" style="top:414px;height:35px"><div class="n" style="top:10.9px;line-height:12px">3</div><div class="f" style="top:2.4px">MOLECULAR<br>BIOLOGY &amp;<br>GENETICS</div><div class="v" style="left:158px;top:10.9px">722</div><div class="v" style="left:241px;top:10.9px">13,625</div><div class="v" style="left:327px;top:10.9px">18.87</div><div class="bar" style="top:9.7px"><b style="width:21px"></b><span>9</span></div></div>
<div class="row" style="top:449px;height:24.3px"><div class="n" style="top:5.6px;line-height:12px">4</div><div class="f" style="top:1.9px">BIOLOGY &amp;<br>BIOCHEMISTRY</div><div class="v" style="left:158px;top:5.6px">860</div><div class="v" style="left:241px;top:5.6px">9,871</div><div class="v" style="left:327px;top:5.6px">11.48</div><div class="bar" style="top:4.4px"><b style="width:32px"></b><span>14</span></div></div>
<div class="row" style="top:473.3px;height:19.9px"><div class="n" style="top:3.6px;line-height:12px">5</div><div class="f" style="top:4.7px">ENGINEERING</div><div class="v" style="left:158px;top:3.6px">898</div><div class="v" style="left:241px;top:3.6px">9,617</div><div class="v" style="left:327px;top:3.6px">10.71</div><div class="bar" style="top:2.4px"><b style="width:25px"></b><span>11</span></div></div>
<div class="row" style="top:493.2px;height:24.5px"><div class="n" style="top:5.4px;line-height:12px">6</div><div class="f" style="top:1.7px">MATERIALS<br>SCIENCE</div><div class="v" style="left:158px;top:5.4px">680</div><div class="v" style="left:241px;top:5.4px">9,423</div><div class="v" style="left:327px;top:5.4px">13.86</div><div class="bar" style="top:4.2px"><b style="width:18px"></b><span>8</span></div></div>
<div class="row" style="top:517.7px;height:32.3px"><div class="n" style="top:10.7px;line-height:12px">7</div><div class="f" style="top:2.2px">PHARMACOLOG<br>Y &amp;<br>TOXICOLOGY</div><div class="v" style="left:158px;top:10.7px">674</div><div class="v" style="left:241px;top:10.7px">7,483</div><div class="v" style="left:327px;top:10.7px">11.10</div><div class="bar" style="top:9.5px"><b style="width:16px"></b><span>7</span></div></div>
<div class="row" style="top:550px;height:26.4px"><div class="n" style="top:8.0px;line-height:12px">8</div><div class="f" style="top:4.3px">ENVIRONMENT/E<br>COLOGY</div><div class="v" style="left:158px;top:8.0px">421</div><div class="v" style="left:241px;top:8.0px">5,086</div><div class="v" style="left:327px;top:8.0px">12.08</div><div class="bar" style="top:6.8px"><b style="width:16px"></b><span>7</span></div></div>
<div class="row" style="top:576.4px;height:20.4px"><div class="n" style="top:4.3px;line-height:12px">0</div><div class="f" style="top:5.4px">ALL FIELDS</div><div class="v" style="left:158px;top:4.3px">10,697</div><div class="v" style="left:241px;top:4.3px">130,572</div><div class="v" style="left:327px;top:4.3px">12.21</div><div class="bar" style="top:3.1px"><b style="width:74px"></b><span class="w">145</span></div></div>
<div class="abs" style="left:183px;top:596.8px;width:522px;height:1px;background:#ebebeb"></div>

<div class="red" style="left:211px;top:413.5px;width:496.5px;height:37px"></div>
<div class="red" style="left:211px;top:549.5px;width:496.5px;height:27.5px"></div>
</body>
</html>
